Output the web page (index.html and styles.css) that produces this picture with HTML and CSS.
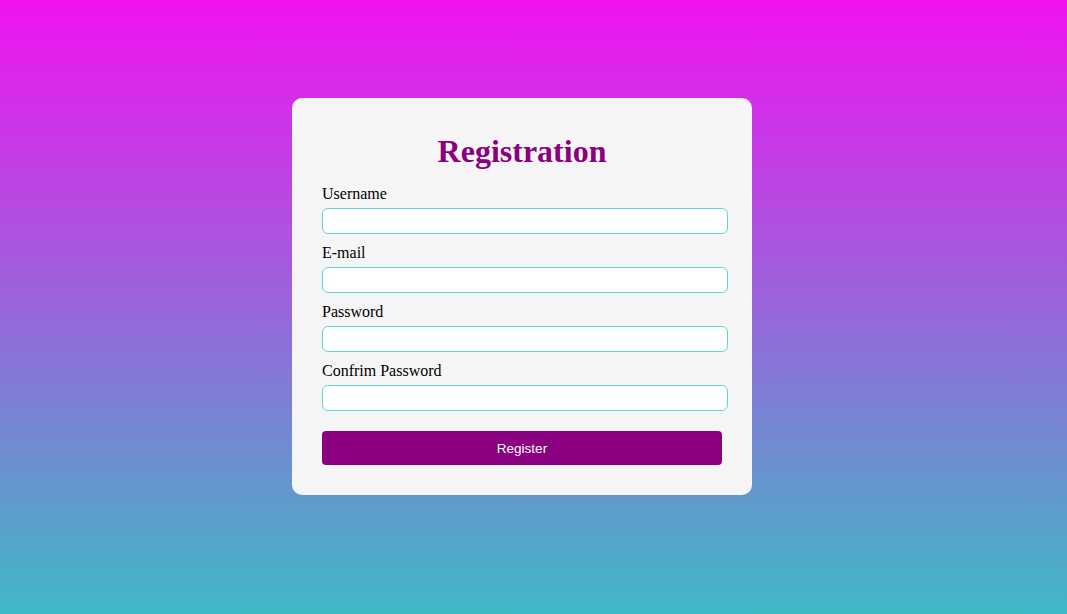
FILE: index.html
```html
<!DOCTYPE html>
<html>
<head>
<meta charset="utf-8">
<link rel="stylesheet" href="styles.css">
</head>
<body>
<div class="page">
  <form class="card">
    <h1 class="title">Registration</h1>
    <label class="label">Username</label>
    <input class="field" type="text">
    <label class="label">E-mail</label>
    <input class="field" type="text">
    <label class="label">Password</label>
    <input class="field" type="password">
    <label class="label">Confrim Password</label>
    <input class="field" type="password">
    <button class="btn" type="button">Register</button>
  </form>
</div>
</body>
</html>
```
FILE: styles.css
```css
html, body {
  margin: 0;
  padding: 0;
  height: 100%;
}
body {
  background: linear-gradient(to bottom, #f013f0, #40b9c5);
  font-family: "Liberation Serif", "Times New Roman", serif;
}
.page {
  box-sizing: border-box;
  height: 614px;
  display: flex;
  align-items: center;
  justify-content: center;
  padding-right: 23px;
  padding-bottom: 21px;
}
.card {
  width: 400px;
  padding: 30px;
  background: #f5f5f5;
  border-radius: 10px;
  display: flex;
  flex-direction: column;
}
.title {
  margin: 5px 0 15px;
  text-align: center;
  color: #8b0080;
  font-size: 32px;
  line-height: 37px;
  font-weight: bold;
}
.label {
  font-size: 16px;
  color: #000;
  line-height: 18px;
  margin-bottom: 5px;
}
.field {
  box-sizing: border-box;
  width: 406px;
  height: 26px;
  margin: 0 0 10px;
  border: 1px solid #62d3d3;
  border-radius: 6px;
  background: #fff;
  outline: none;
}
.btn {
  margin-top: 10px;
  width: 400px;
  height: 34px;
  border: none;
  border-radius: 4px;
  background: #8b0080;
  color: #fff;
  font-family: "Liberation Sans", Arial, sans-serif;
  font-size: 13.5px;
}
```
